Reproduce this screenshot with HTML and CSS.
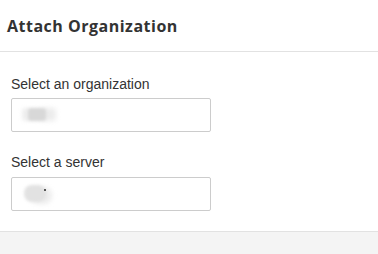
FILE: index.html
```html
<!DOCTYPE html>
<html lang="en">
<head>
  <meta charset="UTF-8" />
  <meta name="viewport" content="width=device-width, initial-scale=1.0"/>
  <title>Attach Organization</title>
  <link rel="stylesheet" href="styles.css">
</head>
<body>

  <div class="modal">
    <div class="modal-header">
      <h2>Attach Organization</h2>
    </div>

    <div class="modal-body">
      <label for="org">Select an organization</label>
      <div class="field" id="org">
        <span class="blur blur-org"></span>
      </div>

      <label for="server" class="second">Select a server</label>
      <div class="field" id="server">
        <span class="blur blur-server"></span>
        <span class="caret-dot"></span>
      </div>
    </div>

    <div class="modal-footer"></div>
  </div>

</body>
</html>
```
FILE: styles.css
```css
body {
  margin: 0;
  background: white;
  font-family: 'Liberation Sans', Arial, sans-serif;
  color: #333;
}
.modal {
  width: 378px;
  height: 254px;
  display: flex;
  flex-direction: column;
}
.modal-header {
  height: 52px;
  border-bottom: 1px solid #e2e2e2;
  padding: 0 7px;
  display: flex;
  align-items: center;
  box-sizing: border-box;
}
h2 {
  margin: 0;
  font-family: 'Open Sans', 'DejaVu Sans', sans-serif;
  font-weight: 700;
  font-size: 16px;
  color: #333;
  letter-spacing: 0.5px;
}
.modal-body {
  padding: 23px 11px 20px;
  flex: none;
}
label {
  display: block;
  font-size: 14px;
  line-height: 18px;
  color: #333;
  margin-bottom: 5px;
}
label.second {
  margin-top: 21px;
  margin-bottom: 6px;
}
.field {
  position: relative;
  width: 200px;
  height: 34px;
  border: 1px solid #ccc;
  border-radius: 2px;
  box-sizing: border-box;
  background: white;
}
.blur {
  position: absolute;
  background: #d8d8d8;
  filter: blur(1.5px);
}
.blur-org {
  left: 16px;
  top: 9px;
  width: 18px;
  height: 13px;
  border-radius: 3px;
  box-shadow: 10px 0 4px #ececec, -6px 0 3px #eeeeee;
}
.blur-server {
  left: 12px;
  top: 7px;
  width: 22px;
  height: 17px;
  border-radius: 8px;
  background: #e2e2e2;
  box-shadow: 6px 2px 4px #ececec;
}
.caret-dot {
  position: absolute;
  left: 32px;
  top: 11px;
  width: 2px;
  height: 2px;
  background: #555;
}
.modal-footer {
  flex: 1;
  border-top: 1px solid #e2e2e2;
  background: #f4f4f4;
}
```
